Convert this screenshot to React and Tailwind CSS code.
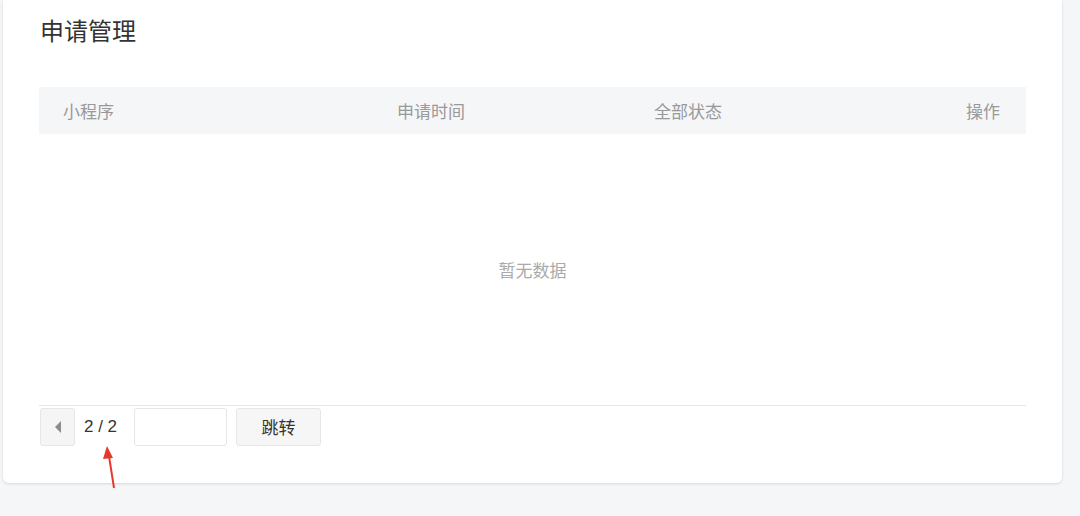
import React from "react";

const font = { fontFamily: '"Noto Sans CJK SC", "Liberation Sans", sans-serif' };

export default function App() {
  return (
    <div className="relative h-[516px] w-[1080px] overflow-hidden bg-[#f5f6f8]" style={font}>
      <div className="ml-[3px] h-[483px] w-[1059px] rounded-b-[6px] bg-white shadow-[0_1px_3px_rgba(0,0,0,0.12)]">
        <div className="pl-[37px] pt-[14px]">
          <h1 className="text-[24px] leading-[32px] text-[#333]">申请管理</h1>
        </div>

        {/* Table */}
        <div className="ml-[36px] mt-[41px] w-[987px]">
          <div className="flex h-[47px] items-center bg-[#f5f6f8] px-6 text-[17px] text-[#999]">
            <div className="w-[334px]">小程序</div>
            <div className="w-[257px]">申请时间</div>
            <div className="flex-1">全部状态</div>
            <div className="pr-[2px] text-right">操作</div>
          </div>
          <div className="flex h-[271px] items-center justify-center text-[17px] text-[#aaa]">
            暂无数据
          </div>
          <div className="border-t border-[#e6e6e6] pt-[2px]">
            <div className="flex items-center">
              <button className="ml-[1px] flex h-[38px] w-[35px] items-center justify-center rounded-[3px] border border-[#e6e6e6] bg-[#f5f5f5]">
                <svg width="8" height="12" viewBox="0 0 8 12">
                  <path d="M7 0 L7 12 L1 6 Z" fill="#8c8c8c" />
                </svg>
              </button>
              <span className="ml-[9px] w-[34px] text-[17px] text-[#333]" style={{ fontFamily: '"Liberation Sans", sans-serif' }}>
                2 / 2
              </span>
              <input className="ml-[16px] h-[38px] w-[93px] rounded-[3px] border border-[#e6e6e6] bg-white outline-none" />
              <button className="ml-[9px] h-[38px] w-[85px] rounded-[3px] border border-[#e6e6e6] bg-[#f6f6f6] text-[17px] text-[#333]">
                跳转
              </button>
            </div>
          </div>
        </div>
      </div>

      {/* annotation arrow */}
      <svg className="absolute left-0 top-0" width="1080" height="516">
        <line x1="114" y1="488" x2="109" y2="456" stroke="#e5392b" strokeWidth="2" />
        <path d="M107 446 L103 459 L113 458 Z" fill="#e5392b" />
      </svg>
    </div>
  );
}
